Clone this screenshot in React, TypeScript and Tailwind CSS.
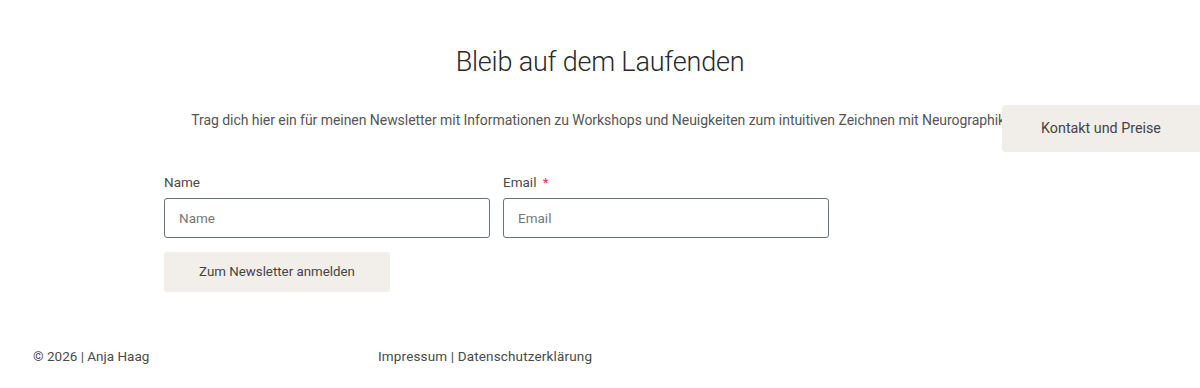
import React from "react";

export default function App() {
  const font = { fontFamily: "Roboto, 'Noto Sans', sans-serif" };
  return (
    <div className="relative w-[1200px] h-[388px] bg-white text-[#4a4a4a] overflow-hidden" style={font}>
      <div className="flex flex-col items-center pt-[44px]">
        <h2 className="text-[27px] font-light leading-[36px] text-[#2a2a2a] tracking-[-0.2px]">Bleib auf dem Laufenden</h2>
        <p className="mt-[30px] text-[14px] leading-[20px] text-[#555] tracking-[-0.05px] text-center">
          Trag dich hier ein für meinen Newsletter mit Informationen zu Workshops und Neuigkeiten zum intuitiven Zeichnen mit Neurographik.
        </p>
      </div>
      <div className="ml-[164px] mt-[42px] w-[665px]">
        <div className="flex gap-[13px]">
          <div className="flex flex-col w-[326px]">
            <label className="text-[13.5px] leading-[20px] text-[#4a4a4a] mb-[6px]">Name</label>
            <input className="h-[40px] border border-[#69727d] rounded-[3px] px-[14px] text-[13.5px] placeholder:text-[#777] outline-none" placeholder="Name" />
          </div>
          <div className="flex flex-col w-[326px]">
            <label className="text-[13.5px] leading-[20px] text-[#4a4a4a] mb-[6px]">
              Email <span className="text-[#e2324b] ml-[3px]">*</span>
            </label>
            <input className="h-[40px] border border-[#69727d] rounded-[3px] px-[14px] text-[13.5px] placeholder:text-[#777] outline-none" placeholder="Email" />
          </div>
        </div>
        <button className="mt-[14px] w-[226px] h-[40px] bg-[#f2efeb] rounded-[3px] text-[13.3px] text-[#444]">Zum Newsletter anmelden</button>
      </div>
      <div className="flex mt-[54px] text-[13.5px] text-[#4a4a4a] leading-[20px]">
        <div className="ml-[33px] w-[345px]">© 2026 | Anja Haag</div>
        <div className="tracking-[0.15px]">Impressum | Datenschutzerklärung</div>
      </div>
      <button className="absolute right-0 top-[105px] w-[198px] h-[47px] bg-[#f1eeea] rounded-l-[4px] text-[14.3px] text-[#444]">Kontakt und Preise</button>
    </div>
  );
}
